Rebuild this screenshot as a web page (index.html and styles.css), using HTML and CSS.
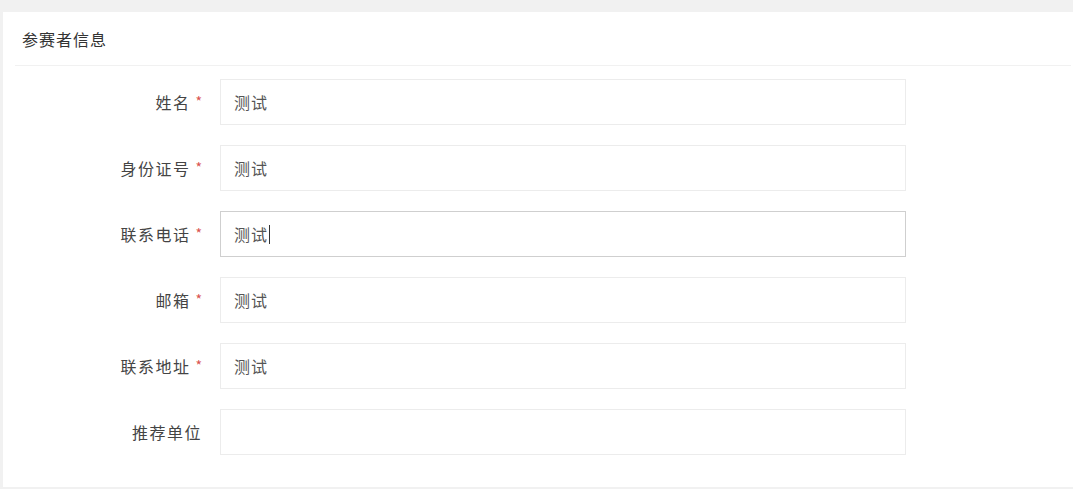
FILE: index.html
```html
<!DOCTYPE html>
<html lang="zh-CN">
<head>
<meta charset="utf-8">
<title>参赛者信息</title>
<link rel="stylesheet" href="styles.css">
</head>
<body>
<div class="page">
  <div class="card">
    <div class="card-header">参赛者信息</div>
    <form class="form">
      <div class="row">
        <label class="label">姓名<span class="req">*</span></label>
        <div class="field"><input class="input" type="text" value="测试"></div>
      </div>
      <div class="row">
        <label class="label">身份证号<span class="req">*</span></label>
        <div class="field"><input class="input" type="text" value="测试"></div>
      </div>
      <div class="row">
        <label class="label">联系电话<span class="req">*</span></label>
        <div class="field"><input class="input focused" type="text" value="测试"><span class="caret"></span></div>
      </div>
      <div class="row">
        <label class="label">邮箱<span class="req">*</span></label>
        <div class="field"><input class="input" type="text" value="测试"></div>
      </div>
      <div class="row">
        <label class="label">联系地址<span class="req">*</span></label>
        <div class="field"><input class="input" type="text" value="测试"></div>
      </div>
      <div class="row">
        <label class="label">推荐单位</label>
        <div class="field"><input class="input" type="text" value=""></div>
      </div>
    </form>
  </div>
</div>
</body>
</html>
```

FILE: styles.css
```css
html, body {
  margin: 0;
  padding: 0;
  background: #ffffff;
}
body {
  font-family: "Noto Sans CJK SC", "Noto Sans", sans-serif;
}
.page {
  width: 1073px;
  height: 489px;
  box-sizing: border-box;
  background: #f1f1f1;
  padding: 12px 0 2px 3px;
}
.card {
  background: #ffffff;
  height: 100%;
}
.card-header {
  height: 54px;
  margin: 0 2px 0 12px;
  padding: 1px 0 0 7px;
  box-sizing: border-box;
  display: flex;
  align-items: center;
  border-bottom: 1px solid #f1f1f1;
  font-size: 16px;
  color: #333333;
  letter-spacing: 1px;
}
.form {
  display: flex;
  flex-direction: column;
  gap: 20px;
  padding-top: 13px;
}
.row {
  display: flex;
  align-items: center;
  gap: 18px;
  height: 46px;
}
.label {
  width: 199px;
  text-align: right;
  font-size: 16px;
  color: #444444;
  letter-spacing: 1.5px;
  white-space: nowrap;
}
.req {
  color: #d9534f;
  font-size: 14px;
  margin-left: 5px;
  position: relative;
  top: -2px;
  letter-spacing: 0;
}
.field {
  position: relative;
  width: 686px;
  height: 46px;
}
.input {
  width: 100%;
  height: 100%;
  box-sizing: border-box;
  border: 1px solid #ececec;
  background: #ffffff;
  padding: 0 13px;
  font-family: "Noto Sans CJK SC", "Noto Sans", sans-serif;
  font-size: 16px;
  color: #555555;
  letter-spacing: 1px;
  outline: none;
  margin: 0;
}
.input.focused {
  border-color: #cfcfcf;
}
.caret {
  position: absolute;
  left: 49px;
  top: 14px;
  width: 1px;
  height: 19px;
  background: #333333;
}
```
